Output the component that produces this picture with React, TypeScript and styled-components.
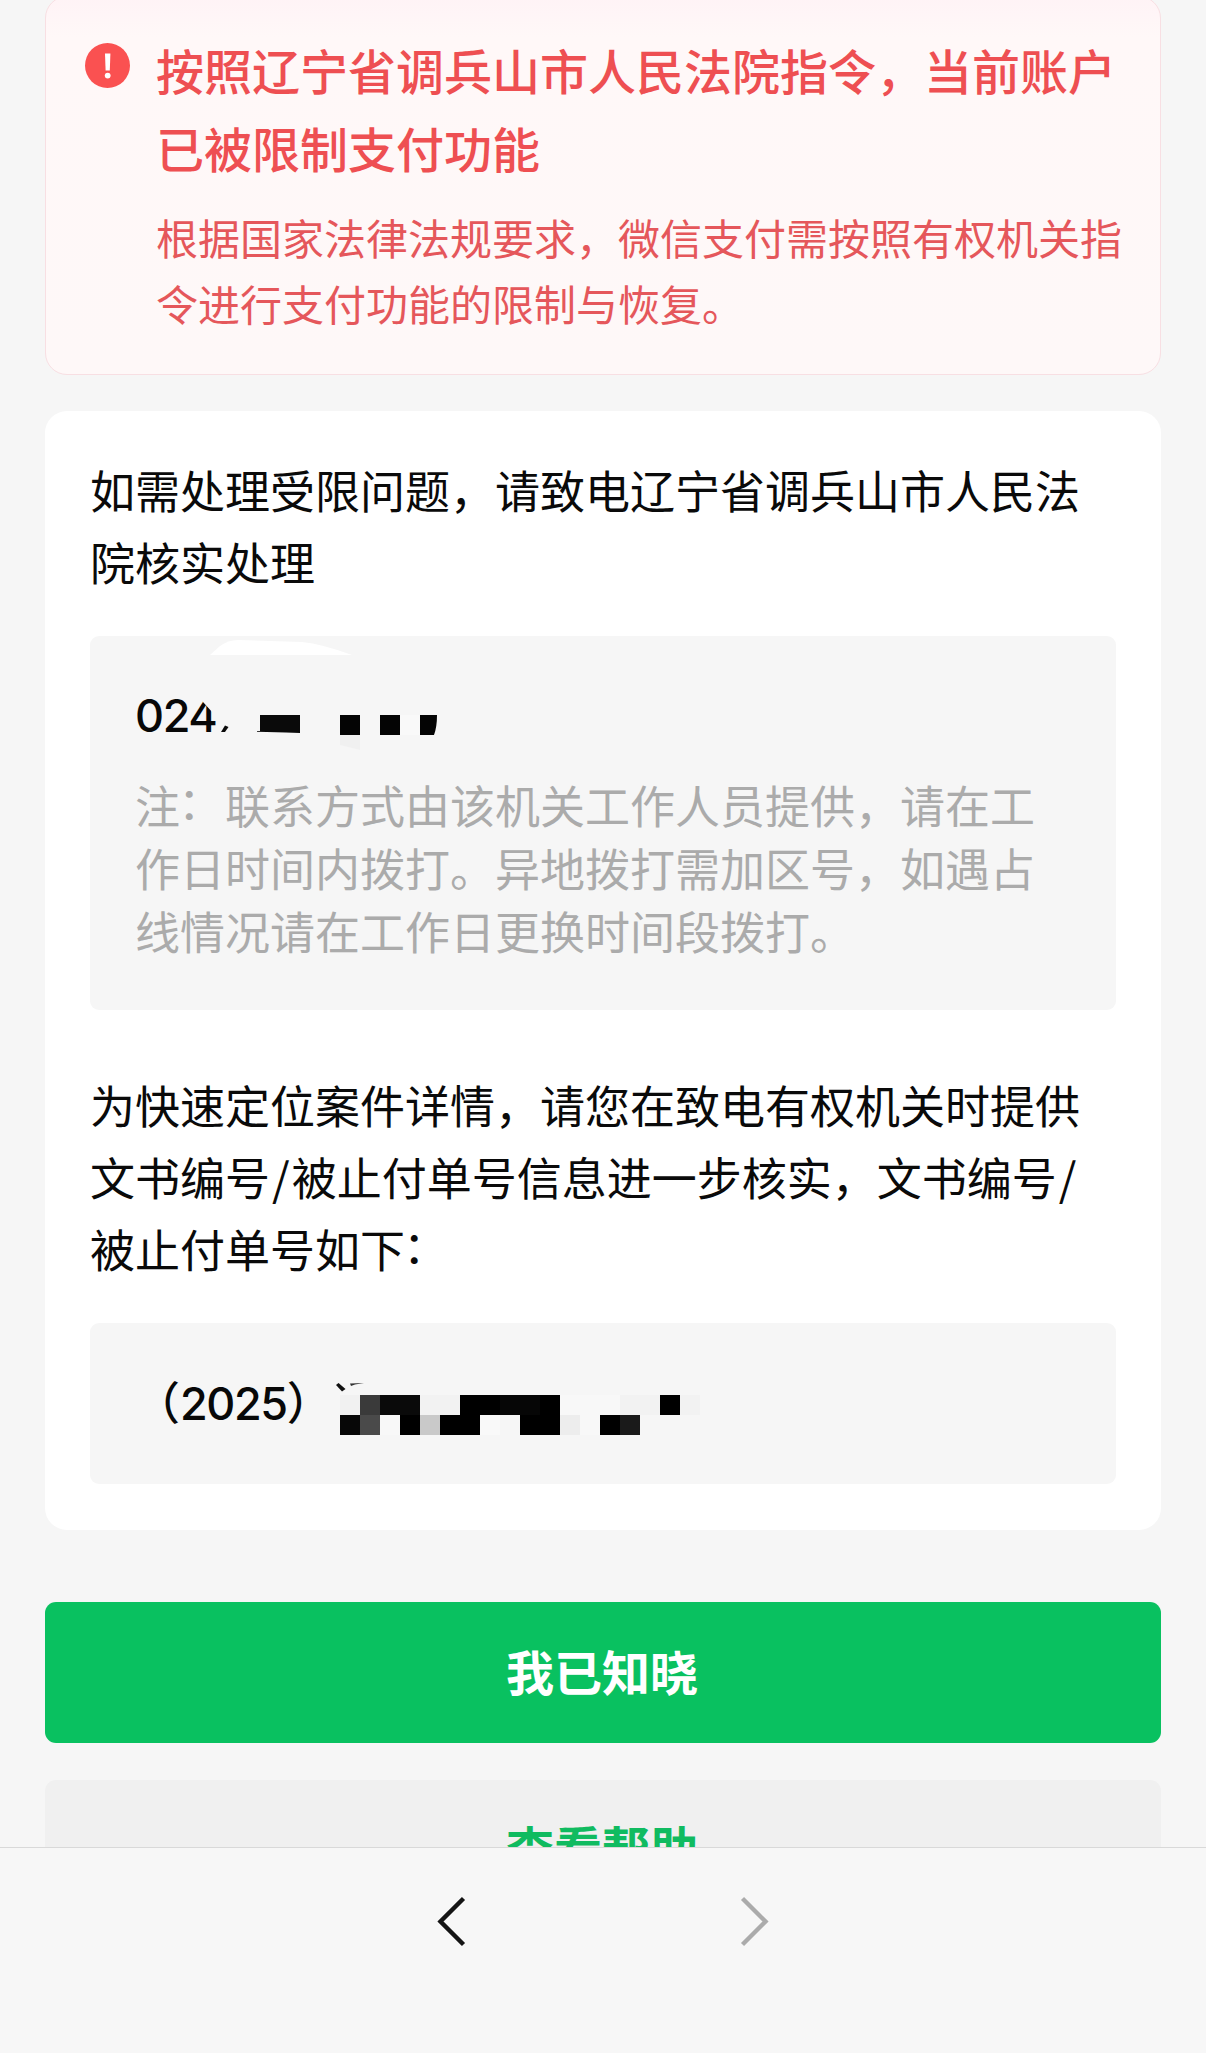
import React from "react";
import styled, { createGlobalStyle } from "styled-components";

const Global = createGlobalStyle`
  body { margin: 0; background: #f6f6f6; }
  * { box-sizing: border-box; }
`;

const cjk = `"Noto Sans CJK SC", sans-serif`;

const Page = styled.div`
  width: 1206px;
  height: 2053px;
  overflow: hidden;
  display: flex;
  flex-direction: column;
  background: #f6f6f6;
  font-family: ${cjk};
`;

const Scroll = styled.main`
  height: 1847px;
  overflow: hidden;
  padding: 0 45px;
  display: flex;
  flex-direction: column;
`;

const Alert = styled.section`
  flex: none;
  height: 379px;
  margin-top: -4px;
  padding: 33px 30px 0 39px;
  display: flex;
  gap: 26px;
  background: linear-gradient(#fff3f6 0, #fff8f8 40px, #fef8f8 100%);
  border: 1px solid #f8dfe3;
  border-radius: 22px;
`;

const AlertIcon = styled.svg`
  flex: none;
  width: 45px;
  height: 45px;
  margin-top: 13px;
`;

const AlertBody = styled.div`
  flex: none;
  color: #ee4f52;
`;

const AlertTitle = styled.h1`
  margin: 0;
  font-size: 48px;
  line-height: 78px;
  font-weight: 500;
  white-space: nowrap;
`;

const AlertText = styled.p`
  margin: 18px 0 0;
  font-size: 42px;
  line-height: 66px;
  color: #e5575b;
  white-space: nowrap;
`;

const Card = styled.section`
  flex: none;
  height: 1119px;
  margin-top: 36px;
  padding: 43px 45px 0;
  background: #fff;
  border-radius: 22px;
`;

const Paragraph = styled.p<{ $top?: number }>`
  margin: ${(p) => p.$top ?? 0}px 0 0;
  font-size: 45px;
  line-height: 72px;
  color: #0a0a0a;
  white-space: nowrap;
`;

const Colon = styled.span`
  margin: 0 2px 0 -2px;
  line-height: 0;
  vertical-align: 4px;
`;

const Slash = styled.span`
  margin: 0 2px;
`;

const Box = styled.div<{ $height: number; $pad: number }>`
  position: relative;
  height: ${(p) => p.$height}px;
  margin-top: 38px;
  padding: ${(p) => p.$pad}px 45px 0;
  background: #f6f6f6;
  border-radius: 9px;
`;

const Value = styled.div`
  font-family: Inter, ${cjk};
  font-size: 45px;
  line-height: 70px;
  font-weight: 500;
  letter-spacing: -1.4px;
  color: #080808;
  white-space: nowrap;
`;

const Wide = styled.span`
  font-family: ${cjk};
  letter-spacing: 0;
`;

const Note = styled.p`
  margin: 22px 0 0;
  font-size: 45px;
  line-height: 63px;
  color: #ababab;
  white-space: nowrap;
`;

const Mask = styled.svg`
  position: absolute;
  left: 0;
  top: 0;
`;

const Button = styled.button<{ $primary?: boolean }>`
  flex: none;
  height: 141px;
  margin: ${(p) => (p.$primary ? 72 : 37)}px 0 0;
  padding: 0 2px ${(p) => (p.$primary ? 5 : 10)}px 0;
  border: 0;
  border-radius: 11px;
  background: ${(p) => (p.$primary ? "#09c160" : "#f0f0f0")};
  color: ${(p) => (p.$primary ? "#fff" : "#10bb60")};
  font-family: ${cjk};
  font-size: 48px;
  line-height: 70px;
  font-weight: 700;
`;

const NavBar = styled.nav`
  height: 206px;
  padding-top: 48px;
  display: flex;
  justify-content: center;
  gap: 274px;
  background: #f7f7f7;
  border-top: 1px solid #d9d9d9;
`;

const Chevron = styled.svg<{ $muted?: boolean }>`
  width: 29px;
  height: 51px;
  fill: none;
  stroke: ${(p) => (p.$muted ? "#ababab" : "#141414")};
  stroke-width: 4.4;
`;

type Cell = [x: number, y: number, w: number, color: string];

const caseCells: Cell[] = [
  [250, 72, 20, "#f1f1f1"],
  [270, 72, 20, "#3a3a3a"],
  [290, 72, 40, "#0a0a0a"],
  [330, 72, 40, "#f2f2f2"],
  [370, 72, 100, "#000"],
  [410, 72, 40, "#060606"],
  [470, 72, 60, "#f8f8f8"],
  [530, 72, 40, "#f2f2f2"],
  [570, 72, 20, "#000"],
  [590, 72, 20, "#f2f2f2"],
  [250, 92, 20, "#070707"],
  [270, 92, 20, "#4a4a4a"],
  [290, 92, 20, "#f8f8f8"],
  [310, 92, 20, "#000"],
  [330, 92, 20, "#c9c9c9"],
  [350, 92, 40, "#000"],
  [390, 92, 20, "#f9f9f9"],
  [430, 92, 40, "#000"],
  [470, 92, 20, "#ededed"],
  [490, 92, 20, "#f8f8f8"],
  [510, 92, 20, "#000"],
  [530, 92, 20, "#1a1a1a"],
];

export default function App() {
  return (
    <Page>
      <Global />
      <Scroll>
        <Alert>
          <AlertIcon viewBox="0 0 45 45">
            <circle cx="22.5" cy="22.5" r="22.5" fill="#fa5151" />
            <path d="M20 10.5h5.4l-.6 17h-4.2z" fill="#fff" />
            <circle cx="22.7" cy="32.6" r="2.9" fill="#fff" />
          </AlertIcon>
          <AlertBody>
            <AlertTitle>
              按照辽宁省调兵山市人民法院指令，当前账户
              <br />
              已被限制支付功能
            </AlertTitle>
            <AlertText>
              根据国家法律法规要求，微信支付需按照有权机关指
              <br />
              令进行支付功能的限制与恢复。
            </AlertText>
          </AlertBody>
        </Alert>

        <Card>
          <Paragraph>
            如需处理受限问题，请致电辽宁省调兵山市人民法
            <br />
            院核实处理
          </Paragraph>
          <Box $height={374} $pad={45}>
            <Value>024,</Value>
            <Note>
              注<Colon>：</Colon>联系方式由该机关工作人员提供，请在工
              <br />
              作日时间内拨打。异地拨打需加区号，如遇占
              <br />
              线情况请在工作日更换时间段拨打。
            </Note>
            <Mask width="400" height="130">
              <path d="M113 56V66L123 77V80H129V56Z" fill="#f6f6f6" />
              <path d="M126.500 82h24v32h-24z" fill="#f6f6f6" />
              <path d="M131 96L135 89.500L138.500 91L135 96Z" fill="#0a0a0a" />
              <path d="M120 19L130 10Q138 4 148 4L212 6Q232 8 262 19Z" fill="#fff" />
              <path d="M170 79H210V97L196 96.500L167 95.800V95H170Z" fill="#0a0a0a" />
              <path d="M250 79h20v20h-20zM290 79h20v20h-20zM330 79h17q0 12-3 20h-14z" fill="#040404" />
              <path d="M310 79h20v20h-20z" fill="#f9f9f9" />
              <path d="M250 99h20v15l-20-5z" fill="#f0f0f0" />
            </Mask>
          </Box>
          <Paragraph $top={59}>
            为快速定位案件详情，请您在致电有权机关时提供
            <br />
            文书编号<Slash>/</Slash>被止付单号信息进一步核实，文书编号<Slash>/</Slash>
            <br />
            被止付单号如下<Colon>：</Colon>
          </Paragraph>
          <Box $height={161} $pad={43}>
            <Value>
              <Wide>（</Wide>2025<Wide>）</Wide>
            </Value>
            <Mask width="700" height="130">
              <path d="M246 62L248.500 60L255.500 66L252 68.500Z" fill="#111" />
              <path d="M260 60.500L274 60L265 61.500L261 63Z" fill="#333" />
              {caseCells.map(([x, y, w, color]) => (
                <rect key={`${x}-${y}`} x={x} y={y} width={w} height="20" fill={color} />
              ))}
            </Mask>
          </Box>
        </Card>

        <Button $primary>我已知晓</Button>
        <Button>查看帮助</Button>
      </Scroll>
      <NavBar>
        <Chevron viewBox="0 0 29 51">
          <path d="M26.500 2.500L3.500 25.500L26.500 48.500" />
        </Chevron>
        <Chevron viewBox="0 0 29 51" $muted>
          <path d="M2.500 2.500L25.500 25.500L2.500 48.500" />
        </Chevron>
      </NavBar>
    </Page>
  );
}
